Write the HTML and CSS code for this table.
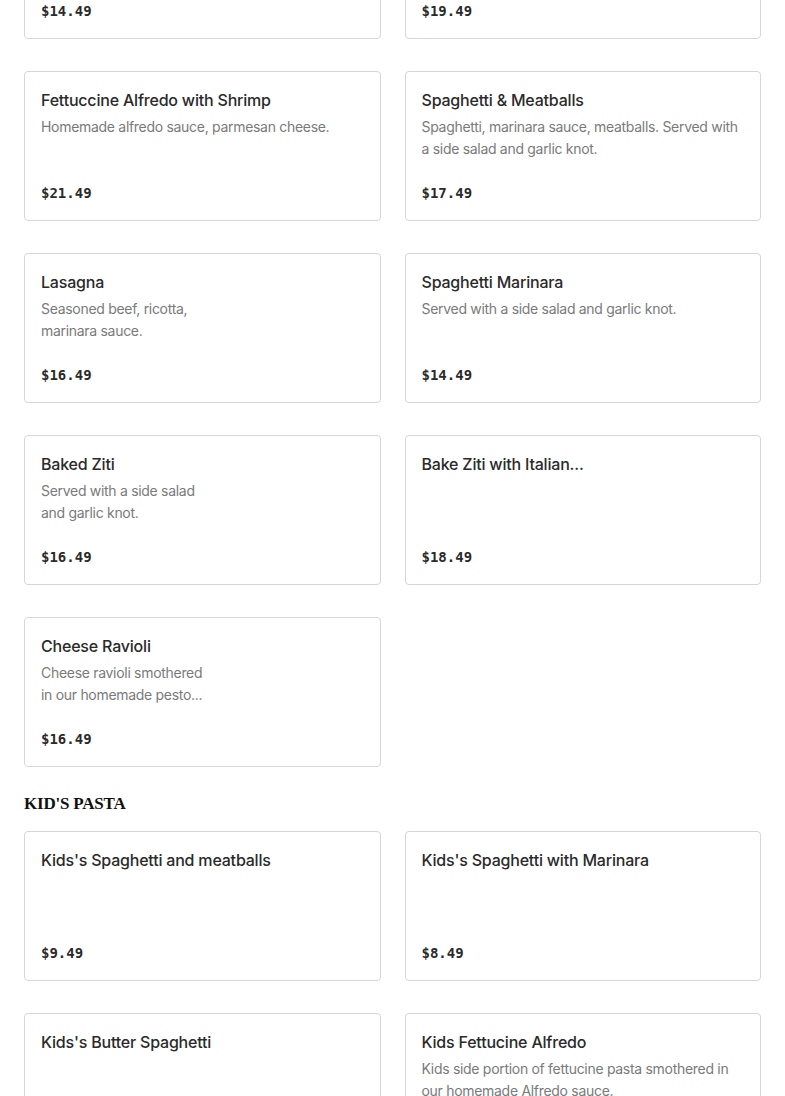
FILE: index.html
```html
<!DOCTYPE html>
<html lang="en">
<head>
  <meta charset="UTF-8">
  <title>Menu - Pasta</title>
  <meta name="viewport" content="width=device-width, initial-scale=1.0">
  <link rel="stylesheet" href="styles.css">
</head>
<body>

<div class="menu">
  <div class="items">
    <div class="item">
      <h3>Fettuccine Alfredo</h3>
      <p class="desc">Homemade alfredo sauce, parmesan cheese.</p>
      <span class="price">$14.49</span>
    </div>
    <div class="item">
      <h3>Fettuccine Alfredo with Chicken</h3>
      <p class="desc">Homemade alfredo sauce, parmesan cheese.</p>
      <span class="price">$19.49</span>
    </div>

    <div class="item">
      <h3>Fettuccine Alfredo with Shrimp</h3>
      <p class="desc">Homemade alfredo sauce, parmesan cheese.</p>
      <span class="price">$21.49</span>
    </div>
    <div class="item">
      <h3>Spaghetti &amp; Meatballs</h3>
      <p class="desc">Spaghetti, marinara sauce, meatballs. Served with a side salad and garlic knot.</p>
      <span class="price">$17.49</span>
    </div>

    <div class="item">
      <h3>Lasagna</h3>
      <p class="desc">Seasoned beef, ricotta,<br>marinara sauce.</p>
      <span class="price">$16.49</span>
    </div>
    <div class="item">
      <h3>Spaghetti Marinara</h3>
      <p class="desc">Served with a side salad and garlic knot.</p>
      <span class="price">$14.49</span>
    </div>

    <div class="item">
      <h3>Baked Ziti</h3>
      <p class="desc">Served with a side salad<br>and garlic knot.</p>
      <span class="price">$16.49</span>
    </div>
    <div class="item">
      <h3>Bake Ziti with Italian...</h3>
      <span class="price">$18.49</span>
    </div>

    <div class="item">
      <h3>Cheese Ravioli</h3>
      <p class="desc">Cheese ravioli smothered<br>in our homemade pesto...</p>
      <span class="price">$16.49</span>
    </div>
  </div>

  <h2 class="section-title">KID'S PASTA</h2>
  <div class="items">
    <div class="item">
      <h3>Kids's Spaghetti and meatballs</h3>
      <span class="price">$9.49</span>
    </div>
    <div class="item">
      <h3>Kids's Spaghetti with Marinara</h3>
      <span class="price">$8.49</span>
    </div>

    <div class="item">
      <h3>Kids's Butter Spaghetti</h3>
      <span class="price">$7.49</span>
    </div>
    <div class="item">
      <h3>Kids Fettucine Alfredo</h3>
      <p class="desc">Kids side portion of fettucine pasta smothered in our homemade Alfredo sauce.</p>
      <span class="price">$8.49</span>
    </div>
  </div>
</div>

</body>
</html>
```

FILE: styles.css
```css
:root {
  --text: #2a2a2a;
  --muted: #7a7a7a;
  --border: #d6d6d6;
}

body {
  margin: 0;
  background: #fff;
  color: var(--text);
  font-family: Inter, 'Liberation Sans', sans-serif;
}

/* page is shown scrolled part way down the menu */
.menu {
  padding: 0 24px;
  margin-top: -111px;
}

.items {
  display: grid;
  grid-template-columns: 1fr 1fr;
  gap: 32px 24px;
}

.item {
  box-sizing: border-box;
  height: 150px;
  padding: 16px;
  border: 1px solid var(--border);
  border-radius: 4px;
  display: flex;
  flex-direction: column;
}

.item h3 {
  margin: 0 0 4px;
  font-size: 16px;
  line-height: 24px;
  font-weight: 500;
  letter-spacing: -0.2px;
}

.desc {
  margin: 0;
  font-size: 14px;
  line-height: 22px;
  letter-spacing: -0.3px;
  color: var(--muted);
}

.price {
  margin-top: auto;
  font-family: 'DejaVu Sans Mono', 'Liberation Mono', monospace;
  font-weight: bold;
  font-size: 14px;
  line-height: 22px;
}

.section-title {
  margin: 25px 0 16px;
  font-family: 'Liberation Serif', serif;
  font-weight: bold;
  font-size: 17px;
  line-height: 23px;
  letter-spacing: -0.2px;
  color: #111;
}
```
